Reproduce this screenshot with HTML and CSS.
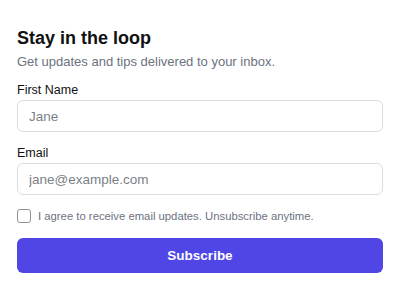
FILE: index.html
```html
<!DOCTYPE html>
<html lang="en">
<head>
  <meta charset="UTF-8">
  <title>Stay in the loop</title>
  <meta name="viewport" content="width=device-width, initial-scale=1">
  <link rel="stylesheet" href="styles.css">
</head>
<body>
<form class="signup">
  <h1>Stay in the loop</h1>
  <p class="lead">Get updates and tips delivered to your inbox.</p>

  <label class="field">
    <span class="field-label">First Name</span>
    <input type="text" placeholder="Jane">
  </label>

  <label class="field">
    <span class="field-label">Email</span>
    <input type="email" placeholder="jane@example.com">
  </label>

  <label class="agree">
    <input type="checkbox">
    <span>I agree to receive email updates. Unsubscribe anytime.</span>
  </label>

  <button type="button" class="btn">Subscribe</button>
</form>
</body>
</html>
```

FILE: styles.css
```css
*{box-sizing:border-box;}
body{margin:0;background:#fff;color:#111;font-family:"Liberation Sans",Arial,sans-serif;}
.signup{display:flex;flex-direction:column;padding:24px 17px;}
h1{margin:0;font-size:18px;line-height:28px;font-weight:700;color:#111;}
.lead{margin:0 0 10px;font-size:13px;line-height:20px;color:#6b7280;}
.field{display:flex;flex-direction:column;gap:2px;margin-bottom:13px;}
.field-label{font-size:12.5px;line-height:16px;font-weight:500;color:#111;}
.field input{height:32px;border:1px solid #d9dce1;border-radius:6px;padding:0 11px;font:inherit;font-size:13.5px;color:#111;}
.field input::placeholder{color:#7b7f87;}
.agree{display:flex;align-items:center;gap:7px;margin:1px 0 15px;font-size:11.3px;color:#6b7280;}
.agree input{appearance:none;margin:0;width:14px;height:14px;border:1.5px solid #8e9196;border-radius:3px;background:#fff;}
.btn{height:35px;border:0;border-radius:6px;background:#4f46e5;color:#fff;font:inherit;font-size:13.5px;font-weight:700;}
```
